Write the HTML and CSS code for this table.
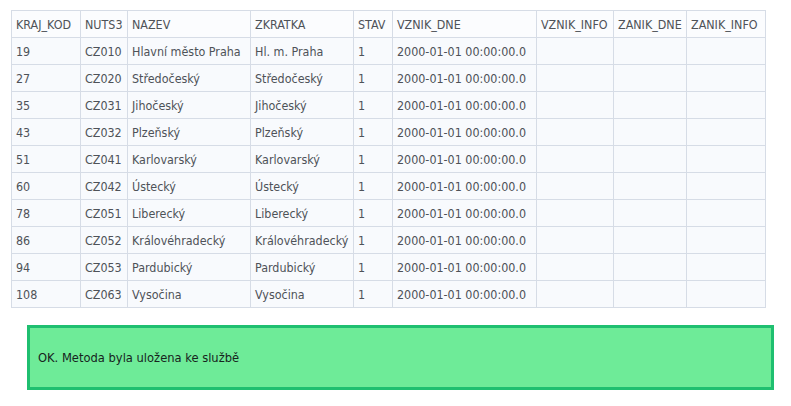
FILE: index.html
```html
<!DOCTYPE html>
<html>
<head>
<meta charset="utf-8">
<link rel="stylesheet" href="styles.css">
</head>
<body>
<table class="grid">
  <colgroup>
    <col class="c1"><col class="c2"><col class="c3"><col class="c4"><col class="c5"><col class="c6"><col class="c7"><col class="c8"><col class="c9">
  </colgroup>
  <thead>
    <tr><th>KRAJ_KOD</th><th>NUTS3</th><th>NAZEV</th><th>ZKRATKA</th><th>STAV</th><th>VZNIK_DNE</th><th>VZNIK_INFO</th><th>ZANIK_DNE</th><th>ZANIK_INFO</th></tr>
  </thead>
  <tbody>
    <tr><td>19</td><td>CZ010</td><td>Hlavní město Praha</td><td>Hl. m. Praha</td><td>1</td><td>2000-01-01 00:00:00.0</td><td></td><td></td><td></td></tr>
    <tr><td>27</td><td>CZ020</td><td>Středočeský</td><td>Středočeský</td><td>1</td><td>2000-01-01 00:00:00.0</td><td></td><td></td><td></td></tr>
    <tr><td>35</td><td>CZ031</td><td>Jihočeský</td><td>Jihočeský</td><td>1</td><td>2000-01-01 00:00:00.0</td><td></td><td></td><td></td></tr>
    <tr><td>43</td><td>CZ032</td><td>Plzeňský</td><td>Plzeňský</td><td>1</td><td>2000-01-01 00:00:00.0</td><td></td><td></td><td></td></tr>
    <tr><td>51</td><td>CZ041</td><td>Karlovarský</td><td>Karlovarský</td><td>1</td><td>2000-01-01 00:00:00.0</td><td></td><td></td><td></td></tr>
    <tr><td>60</td><td>CZ042</td><td>Ústecký</td><td>Ústecký</td><td>1</td><td>2000-01-01 00:00:00.0</td><td></td><td></td><td></td></tr>
    <tr><td>78</td><td>CZ051</td><td>Liberecký</td><td>Liberecký</td><td>1</td><td>2000-01-01 00:00:00.0</td><td></td><td></td><td></td></tr>
    <tr><td>86</td><td>CZ052</td><td>Královéhradecký</td><td>Královéhradecký</td><td>1</td><td>2000-01-01 00:00:00.0</td><td></td><td></td><td></td></tr>
    <tr><td>94</td><td>CZ053</td><td>Pardubický</td><td>Pardubický</td><td>1</td><td>2000-01-01 00:00:00.0</td><td></td><td></td><td></td></tr>
    <tr><td>108</td><td>CZ063</td><td>Vysočina</td><td>Vysočina</td><td>1</td><td>2000-01-01 00:00:00.0</td><td></td><td></td><td></td></tr>
  </tbody>
</table>
<div class="notice">OK. Metoda byla uložena ke službě</div>
</body>
</html>
```
FILE: styles.css
```css
html, body {
  margin: 0;
  padding: 0;
  background: #ffffff;
}
body {
  padding: 10px 11px 0 11px;
  font-family: "DejaVu Sans Condensed", "DejaVu Sans", sans-serif;
  font-size: 12.4px;
  color: #4e5258;
}
.grid {
  border-collapse: collapse;
  table-layout: fixed;
  width: 754px;
  background: #f8fafd;
}
.grid th, .grid td {
  border: 1px solid #d6dce6;
  height: 27px;
  padding: 0 0 0 4px;
  text-align: left;
  font-weight: normal;
  white-space: nowrap;
  overflow: hidden;
  box-sizing: border-box;
}
.grid th {
  background: #fbfcfe;
}
.c1 { width: 69px; }
.c2 { width: 47px; }
.c3 { width: 123px; }
.c4 { width: 103px; }
.c5 { width: 39px; }
.c6 { width: 144px; }
.c7 { width: 77px; }
.c8 { width: 73px; }
.c9 { width: 79px; }
.notice {
  margin: 17px 0 0 16px;
  width: 733px;
  height: 59px;
  border: 3px solid #1fbf70;
  background: #6eeb98;
  color: #17241d;
  font-size: 12.8px;
  display: flex;
  align-items: center;
  padding-left: 8px;
  box-sizing: content-box;
}
```
